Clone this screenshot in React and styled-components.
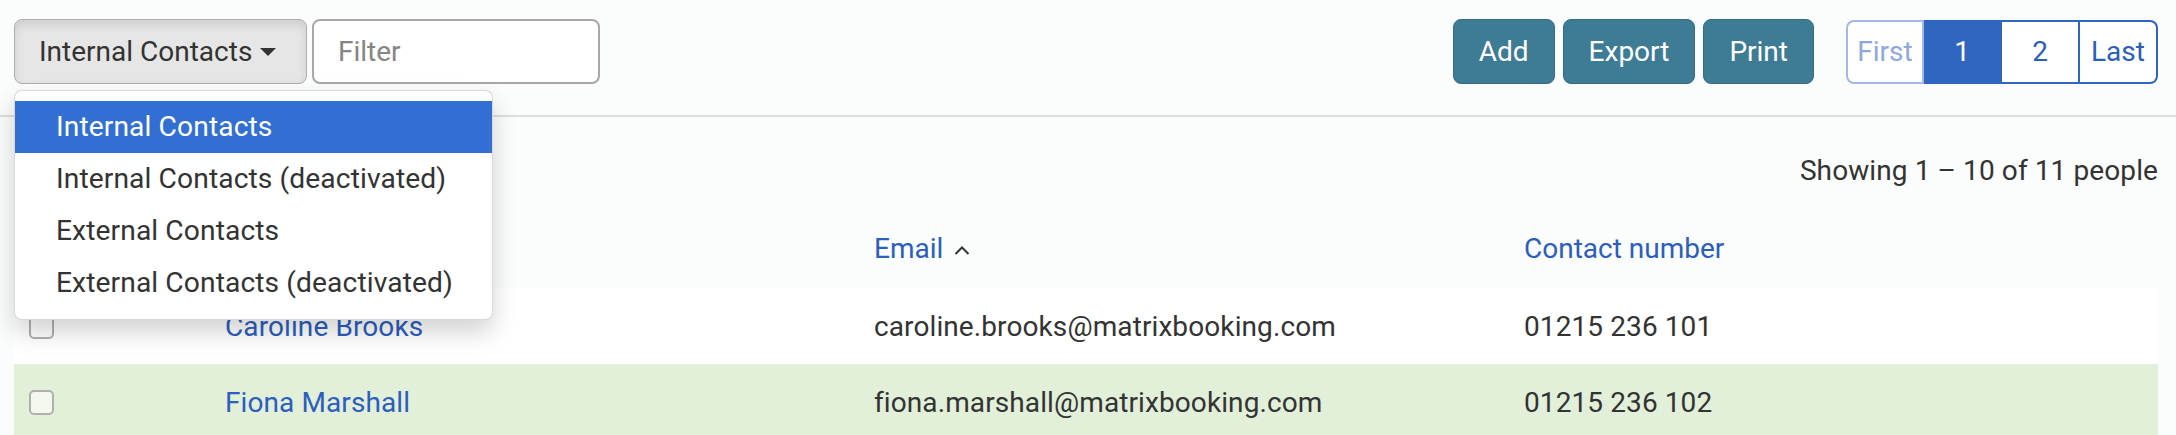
import React from "react";
import styled, { createGlobalStyle } from "styled-components";

const GlobalStyle = createGlobalStyle`
  body {
    margin: 0;
    background: #fbfcfc;
    font-family: Roboto, "Liberation Sans", sans-serif;
    color: #333;
    overflow: hidden;
  }
  * { box-sizing: border-box; }
`;

const menuOptions = [
  "Internal Contacts",
  "Internal Contacts (deactivated)",
  "External Contacts",
  "External Contacts (deactivated)",
];

const people = [
  { name: "Caroline Brooks", email: "caroline.brooks@matrixbooking.com", phone: "01215 236 101" },
  { name: "Fiona Marshall", email: "fiona.marshall@matrixbooking.com", phone: "01215 236 102" },
];

const App = () => {
  return (
    <>
      <GlobalStyle />
      <Toolbar>
        <div className="left">
          <DropdownWrap>
            <DropButton>
              Internal Contacts
              <Caret />
            </DropButton>
            <Menu>
              {menuOptions.map((opt, i) => (
                <MenuItem key={opt} $active={i === 0}>
                  {opt}
                </MenuItem>
              ))}
            </Menu>
          </DropdownWrap>
          <FilterInput placeholder="Filter" />
        </div>
        <div className="right">
          <ActionButton>Add</ActionButton>
          <ActionButton>Export</ActionButton>
          <ActionButton>Print</ActionButton>
          <Pager>
            <PageItem $disabled>First</PageItem>
            <PageItem $active>1</PageItem>
            <PageItem>2</PageItem>
            <PageItem>Last</PageItem>
          </Pager>
        </div>
      </Toolbar>
      <Divider />
      <Content>
        <Summary>
          <span>Showing 1 – 10 of 11 people</span>
        </Summary>
        <HeaderRow>
          <span />
          <span />
          <HeadCell>
            Email
            <svg width="16" height="9" viewBox="0 0 16 9">
              <polyline points="1.5,8 8,1.5 14.5,8" fill="none" stroke="#333" strokeWidth="2" />
            </svg>
          </HeadCell>
          <HeadCell>Contact number</HeadCell>
        </HeaderRow>
        {people.map((p, i) => (
          <Row key={p.email} $striped={i % 2 === 1}>
            <span>
              <Checkbox />
            </span>
            <NameLink>{p.name}</NameLink>
            <span>{p.email}</span>
            <span>{p.phone}</span>
          </Row>
        ))}
      </Content>
    </>
  );
};

export default App;

const Toolbar = styled.div`
  display: flex;
  justify-content: space-between;
  align-items: center;
  padding: 19px 18px 0 14px;
  height: 84px;

  & .left {
    display: flex;
    gap: 5px;
  }

  & .right {
    display: flex;
    align-items: center;
    gap: 8px;
  }
`;

const DropdownWrap = styled.div`
  position: relative;
`;

const DropButton = styled.button`
  display: flex;
  align-items: center;
  gap: 8px;
  width: 293px;
  height: 65px;
  padding: 0 24px;
  background: #e6e6e6;
  border: 1px solid #adadad;
  border-radius: 8px;
  box-shadow: inset 0 5px 10px rgba(0, 0, 0, 0.1);
  font-family: inherit;
  font-size: 28px;
  color: #333;
`;

const Caret = styled.span`
  width: 0;
  height: 0;
  border-left: 8px solid transparent;
  border-right: 8px solid transparent;
  border-top: 8px solid #333;
`;

const Menu = styled.div`
  position: absolute;
  top: calc(100% + 6px);
  left: 0;
  width: 479px;
  padding: 10px 0;
  background: #fff;
  border: 1px solid rgba(0, 0, 0, 0.15);
  border-radius: 8px;
  box-shadow: 0 12px 24px rgba(0, 0, 0, 0.175);
  z-index: 10;
`;

const MenuItem = styled.div`
  height: 52px;
  line-height: 52px;
  padding: 0 41px;
  font-size: 28.2px;
  letter-spacing: 0.1px;
  white-space: nowrap;
  color: ${(p) => (p.$active ? "#fff" : "#333")};
  background: ${(p) => (p.$active ? "#326fd3" : "transparent")};
`;

const FilterInput = styled.input`
  width: 288px;
  height: 65px;
  padding: 0 24px;
  border: 2px solid #a8a8a8;
  border-radius: 8px;
  background: #fff;
  font-family: inherit;
  font-size: 28px;
  color: #333;

  &::placeholder {
    color: #858585;
  }
`;

const ActionButton = styled.button`
  height: 65px;
  padding: 0 25px;
  background: #3e7b95;
  border: 1px solid #346d86;
  border-radius: 8px;
  color: #fff;
  font-family: inherit;
  font-size: 28px;
`;

const Pager = styled.div`
  display: flex;
  margin-left: 24px;
  height: 64px;
`;

const PageItem = styled.div`
  width: 78px;
  display: flex;
  align-items: center;
  justify-content: center;
  font-size: 28px;
  border: 2px solid ${(p) => (p.$disabled ? "#a3b8e3" : "#3066c0")};
  border-left-width: 0;
  background: ${(p) => (p.$active ? "#3066c0" : "#fff")};
  color: ${(p) => (p.$active ? "#fff" : p.$disabled ? "#8ea8dc" : "#2c5ebd")};

  &:first-child {
    border-left-width: 2px;
    border-radius: 8px 0 0 8px;
  }
  &:last-child {
    border-radius: 0 8px 8px 0;
  }
`;

const Divider = styled.div`
  margin-top: 31px;
  height: 2px;
  background: #dedede;
`;

const Content = styled.div`
  padding: 0 18px 0 14px;
`;

const Summary = styled.div`
  display: flex;
  justify-content: flex-end;
  padding: 38px 0 21px;
  line-height: 32px;
  font-size: 28px;
  letter-spacing: 0.1px;
`;

const gridCols = "211px 649px 650px 1fr";

const HeaderRow = styled.div`
  display: grid;
  grid-template-columns: ${gridCols};
  align-items: center;
  height: 80px;
  font-size: 28px;
`;

const HeadCell = styled.span`
  display: flex;
  align-items: center;
  gap: 11px;
  color: #2c5ebd;

  & svg {
    margin-top: 4px;
  }
`;

const Row = styled.div`
  display: grid;
  grid-template-columns: ${gridCols};
  align-items: center;
  height: 76px;
  font-size: 28px;
  letter-spacing: 0.1px;
  background: ${(p) => (p.$striped ? "#e2efd9" : "#fff")};

  & > span:first-child {
    display: flex;
    padding-left: 15px;
  }
`;

const Checkbox = styled.span`
  width: 25px;
  height: 25px;
  border: 2px solid #b0b0b0;
  border-radius: 5px;
  background: rgba(255, 255, 255, 0.55);
`;

const NameLink = styled.span`
  color: #2c5ebd;
`;
